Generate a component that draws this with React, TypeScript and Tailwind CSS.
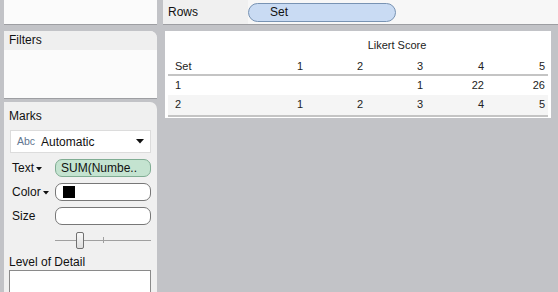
import * as React from 'react';

function Caret() {
  return (
    <svg width="6" height="4" viewBox="0 0 6 4" className="ml-[2px] mt-[2px]">
      <path d="M0 0h6L3 3.5z" fill="#111" />
    </svg>
  );
}

function MarksCard() {
  return (
    <div className="flex-1 bg-[#f0f0f0] rounded-tr-[7px] flex flex-col">
      <div className="pl-[5px] pt-[6px] leading-[16px] text-[12px]">Marks</div>

      {/* Mark type dropdown */}
      <div className="mt-[6px] ml-[6px] w-[141px] h-[23px] bg-white border border-[#dcdcdc] flex items-center pl-[6px] pr-[6px]">
        <span className="text-[10.5px] text-[#5f7690] mr-[6px]">Abc</span>
        <span className="text-[12px] flex-1">Automatic</span>
        <svg width="8" height="5" viewBox="0 0 8 5">
          <path d="M0 0h8L4 4.5z" fill="#111" />
        </svg>
      </div>

      <div className="mt-[6px] flex items-center h-[18px]">
        <div className="w-[51px] pl-[8px] flex items-center text-[12px]">Text<Caret /></div>
        <div className="w-[96px] h-[18px] rounded-[7px] bg-[#c4e3d0] border border-[#80ad93] pl-[5px] text-[12px] leading-[16px]">
          SUM(Numbe..
        </div>
      </div>

      <div className="mt-[6px] flex items-center h-[18px]">
        <div className="w-[51px] pl-[8px] flex items-center text-[12px]">Color<Caret /></div>
        <div className="w-[96px] h-[18px] rounded-[7px] bg-white border border-[#777] flex items-center pl-[7px]">
          <div className="w-[12px] h-[12px] bg-black" />
        </div>
      </div>

      <div className="mt-[6px] flex items-center h-[18px]">
        <div className="w-[51px] pl-[8px] text-[12px]">Size</div>
        <div className="w-[96px] h-[18px] rounded-[7px] bg-white border border-[#777]" />
      </div>

      {/* Size slider */}
      <div className="mt-[7px] ml-[51px] w-[96px] h-[17px] relative">
        <div className="absolute left-0 right-0 top-[8px] h-px bg-[#a0a0a0]" />
        <div className="absolute left-[48px] top-[5px] w-px h-[6px] bg-[#a0a0a0]" />
        <div className="absolute left-[21px] top-0 w-[8px] h-[17px] rounded-[2px] border border-[#707070] bg-gradient-to-b from-[#f8f8f8] to-[#dedede]" />
      </div>

      <div className="mt-[5px] pl-[5px] leading-[16px] text-[12px]">Level of Detail</div>
      <div className="ml-[5px] w-[142px] flex-1 bg-white border border-[#8a8a8a] border-b-0" />
    </div>
  );
}

const header = ['1', '2', '3', '4', '5'];
const rows = [
  ['1', '', '', '1', '22', '26'],
  ['2', '1', '2', '3', '4', '5'],
];

function Crosstab() {
  const cols = 'grid grid-cols-[78px_60px_60px_60px_61px_61px]';
  return (
    <div className="ml-[2px] mr-[7px] h-[87px] bg-white px-[3px] pt-[7px] text-[11px] text-[#222]">
      <div className={cols + ' leading-[14px]'}>
        <div />
        <div className="col-span-5 text-center">Likert Score</div>
      </div>
      <div className={cols + ' h-[24px] pt-[7px] leading-[14px] border-b-2 border-[#c4c4c4]'}>
        <div className="pl-[7px]">Set</div>
        {header.map((h) => (
          <div key={h} className="text-right pr-[3px]">{h}</div>
        ))}
      </div>
      {rows.map((r, i) => (
        <div
          key={i}
          className={
            cols +
            ' items-center ' +
            (i === 1 ? 'h-[22px] pb-[2px] bg-[#f5f5f5] border-b-2 border-[#c4c4c4]' : 'h-[19px]')
          }
        >
          {r.map((c, j) => (
            <div key={j} className={j === 0 ? 'pl-[7px]' : 'text-right pr-[3px]'}>{c}</div>
          ))}
        </div>
      ))}
    </div>
  );
}

export default function App() {
  return (
    <div
      className="w-[558px] h-[292px] overflow-hidden bg-[#c2c3c7] flex text-[#111]"
      style={{ fontFamily: '"Liberation Sans", Arial, sans-serif' }}
    >
      {/* Left column: cards */}
      <div className="ml-[4px] w-[153px] flex flex-col">
        <div className="h-[24px] bg-[#fbfbfb] shadow-[0_1px_0_#9d9ea2]" />
        <div className="mt-[7px] h-[67px] bg-[#fbfbfb] rounded-tr-[7px] shadow-[0_1px_0_#9d9ea2]">
          <div className="h-[19px] bg-[#efefef] rounded-tr-[7px] pl-[5px] leading-[19px] text-[12px]">Filters</div>
        </div>
        <div className="mt-[4px] flex-1 flex flex-col">
          <MarksCard />
        </div>
      </div>

      {/* Right column: shelf and view */}
      <div className="ml-[6px] flex-1 flex flex-col">
        <div className="h-[24px] flex shadow-[0_1px_0_#9d9ea2]">
          <div className="w-[85px] bg-[#f0f0f0] pl-[5px] leading-[24px] text-[12px]">Rows</div>
          <div className="flex-1 bg-[#f7f7f7] pt-[3px]">
            <div className="w-[148px] h-[19px] rounded-full bg-[#c9dbf3] border border-[#7893b3] pl-[21px] text-[12px] leading-[17px]">
              Set
            </div>
          </div>
        </div>
        <div className="mt-[7px]">
          <Crosstab />
        </div>
      </div>
    </div>
  );
}
